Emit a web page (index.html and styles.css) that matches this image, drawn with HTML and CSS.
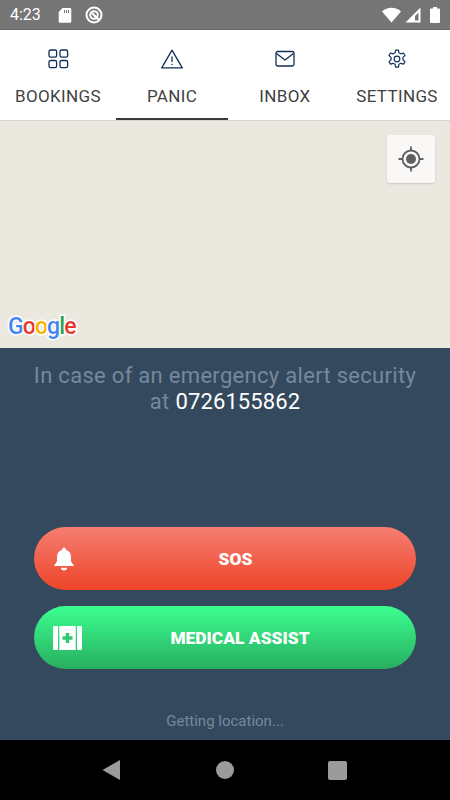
FILE: index.html
```html
<!DOCTYPE html>
<html lang="en">
<head>
    <meta charset="UTF-8">
    <meta name="viewport" content="width=device-width, initial-scale=1.0">
    <title>Panic</title>
    <link rel="stylesheet" href="styles.css">
</head>
<body>

    <!-- Status bar -->
    <div class="status-bar">
        <span class="time">4:23</span>
        <svg class="st-icon" width="14" height="16" viewBox="0 0 14 16"><path d="M4.500 1H12a1.300 1.300 0 0 1 1.300 1.300v12.200a1.300 1.300 0 0 1-1.300 1.300H2a1.300 1.300 0 0 1-1.300-1.300V5z" fill="#fff"/><path d="M6.500 3v3M8.500 3v3M10.500 3v3" stroke="#757575" stroke-width="1"/></svg>
        <svg class="st-icon st-gap" width="18" height="18" viewBox="0 0 18 18" fill="none" stroke="#fff"><circle cx="9" cy="9" r="7.500" stroke-width="2"/><circle cx="9" cy="9" r="3.800" stroke-width="2"/><path d="M7 7l7 7" stroke-width="2.200"/></svg>
        <div class="st-right">
            <svg width="19" height="16" viewBox="0 0 19 16"><path d="M0 4.500C5 -0.500 14 -0.500 19 4.500L9.500 15.500z" fill="#fff"/></svg>
            <svg width="16" height="16" viewBox="0 0 16 16"><path d="M15.500 .5V15.500H.5z" fill="#fff"/><path d="M10 9v4.500h3.500V5.500z" fill="#757575"/></svg>
            <svg class="batt" width="10" height="16" viewBox="0 0 10 16"><path d="M3 0h4v1.500h2a1 1 0 0 1 1 1V15a1 1 0 0 1-1 1H1a1 1 0 0 1-1-1V2.500a1 1 0 0 1 1-1h2z" fill="#fff"/></svg>
        </div>
    </div>

    <!-- Tabs -->
    <nav class="tabs">
        <div class="tab">
            <svg width="22" height="20" viewBox="0 0 22 20" fill="none" stroke="#0f2f57" stroke-width="1.300"><rect x="2" y="1" width="7.600" height="7.200" rx="1.600"/><rect x="13" y="1" width="7.600" height="7.200" rx="1.600"/><rect x="2" y="11.500" width="7.600" height="7.200" rx="1.600"/><rect x="13" y="11.500" width="7.600" height="7.200" rx="1.600"/></svg>
            <span>BOOKINGS</span>
        </div>
        <div class="tab active">
            <svg width="24" height="20" viewBox="0 0 24 20" fill="none" stroke="#0f2f57" stroke-width="1.300" stroke-linejoin="round"><path d="M12 1.200L22.300 18.800H1.700z"/><path d="M12 7.500v5.500M12 14.700v1.400"/></svg>
            <span>PANIC</span>
        </div>
        <div class="tab">
            <svg width="20" height="18" viewBox="0 0 20 18" fill="none" stroke="#0f2f57" stroke-width="1.300" stroke-linejoin="round"><rect x="1" y="1.500" width="18" height="14.500" rx="1.800"/><path d="M1.500 3.500l8.500 6.500 8.500-6.500"/></svg>
            <span>INBOX</span>
        </div>
        <div class="tab">
            <svg width="20" height="20" viewBox="0 0 24 24" fill="none" stroke="#0f2f57" stroke-width="1.400" stroke-linejoin="round"><path d="M10.300 1.300h3.400l.6 3.300 2.400 1.200 3.100-1 1.800 3.100-2.500 2.200v2.800l2.500 2.200-1.800 3.100-3.100-1-2.400 1.200-.6 3.300h-3.400l-.6-3.300-2.400-1.200-3.100 1-1.800-3.100 2.500-2.200v-2.800l-2.500-2.200 1.800-3.100 3.100 1 2.400-1.200z"/><circle cx="12" cy="12" r="3.400"/></svg>
            <span>SETTINGS</span>
        </div>
    </nav>

    <!-- Map -->
    <div class="map">
        <div class="locate">
            <svg width="28" height="28" viewBox="0 0 28 28" fill="none" stroke="#5f5f5f" stroke-width="1.800"><circle cx="14" cy="14" r="8.500"/><circle cx="14" cy="14" r="5" fill="#5f5f5f" stroke="none"/><path d="M14 1.500v4M14 22.500v4M1.500 14h4M22.500 14h4"/></svg>
        </div>
        <div class="google"><span class="g-blue">G</span><span class="g-red">o</span><span class="g-yellow">o</span><span class="g-blue">g</span><span class="g-green">l</span><span class="g-red">e</span></div>
    </div>

    <!-- Panic panel -->
    <div class="panel">
        <div class="notice">
            <p>In case of an emergency alert security</p>
            <div class="notice-line">
                <span>at</span>
                <span class="phone">0726155862</span>
            </div>
        </div>
        <div class="actions">
            <button class="btn btn-sos">
                <svg class="btn-icon" width="22" height="24" viewBox="0 0 22 24"><path d="M11 .5a1.700 1.700 0 0 1 1.700 1.700v.6c3.500.8 5.300 3.700 5.300 7v3.500c0 1.800 1 3 2.500 4.400.4.500.2 1.300-.5 1.300H2c-.7 0-.9-.8-.5-1.300C3 16.300 4 15.100 4 13.300V9.800c0-3.300 1.800-6.200 5.300-7v-.6A1.700 1.700 0 0 1 11 .5z" fill="#fff"/><path d="M8 20.800h6a3 2.700 0 0 1-6 0z" fill="#fff"/></svg>
                <span>SOS</span>
            </button>
            <button class="btn btn-medical">
                <svg class="btn-icon" width="29" height="25" viewBox="0 0 29 25"><rect x="0" y="0.500" width="5" height="24" rx="1.200" fill="#fff"/><rect x="6.300" y="0.500" width="16.400" height="24" fill="#fff"/><rect x="24" y="0.500" width="5" height="24" rx="1.200" fill="#fff"/><path d="M12.800 7.500h3.400v3.300h3.300v3.400h-3.300v3.300h-3.400v-3.300H9.500v-3.400h3.300z" fill="#2fc873"/></svg>
                <span>MEDICAL ASSIST</span>
            </button>
        </div>
        <p class="location">Getting location...</p>
    </div>

    <!-- Android nav -->
    <div class="sys-nav">
        <svg width="18" height="20" viewBox="0 0 18 20"><path d="M18 0V20L.5 10z" fill="#9b9b9b"/></svg>
        <div class="home"></div>
        <div class="recent"></div>
    </div>

</body>
</html>
```

FILE: styles.css
```css
* {
    margin: 0;
    padding: 0;
    box-sizing: border-box;
}

html, body {
    height: 100%;
    overflow: hidden;
}

body {
    display: flex;
    flex-direction: column;
    font-family: Roboto, "Liberation Sans", sans-serif;
    background: #fff;
}

/* Status bar */
.status-bar {
    flex: 0 0 30px;
    display: flex;
    align-items: center;
    padding: 0 10px;
    background: #757575;
    border-bottom: 1px solid #6a6a6a;
    color: #fff;
}

.time {
    font-size: 16px;
    margin-right: 17px;
}

.st-gap {
    margin-left: 13px;
}

.st-right {
    margin-left: auto;
    display: flex;
    align-items: center;
    gap: 4px;
}

.batt {
    margin-left: 5px;
}

/* Tabs */
.tabs {
    flex: 0 0 91px;
    display: grid;
    grid-template-columns: 116px 112px 114px 110px;
    background: #fff;
    border-bottom: 1px solid #d9d6cf;
}

.tab {
    display: flex;
    flex-direction: column;
    align-items: center;
    padding-top: 19px;
    color: #3f3f3f;
    font-size: 17px;
    font-weight: 400;
    letter-spacing: .35px;
    white-space: nowrap;
}

.tab svg {
    height: 20px;
}

.tab span {
    margin-top: 17px;
}

.tab.active {
    border-bottom: 2px solid #3c3c3c;
}

/* Map */
.map {
    position: relative;
    flex: 0 0 227px;
    background: #ebe8e0;
}

.locate {
    position: absolute;
    top: 14px;
    right: 15px;
    width: 48px;
    height: 48px;
    display: flex;
    align-items: center;
    justify-content: center;
    background: #f9f8f6;
    border-radius: 3px;
    box-shadow: 0 1px 2px rgba(0, 0, 0, 0.15);
}

.google {
    position: absolute;
    left: 8px;
    bottom: 8px;
    font-family: Roboto, sans-serif;
    font-size: 23px;
    font-weight: 500;
    line-height: 26px;
    letter-spacing: -.9px;
    paint-order: stroke fill;
    -webkit-text-stroke: 3px #fff;
}

.g-blue { color: #4285f4; }
.g-red { color: #e8392c; }
.g-yellow { color: #f5b400; }
.g-green { color: #2ba24c; }

/* Panel */
.panel {
    flex: 1;
    display: flex;
    flex-direction: column;
    align-items: center;
    background: #34495e;
}

.notice {
    margin-top: 15px;
    color: #76889c;
    font-size: 22px;
    line-height: 26px;
    letter-spacing: .3px;
    text-align: center;
}

.notice-line {
    display: flex;
    justify-content: center;
    gap: 6px;
}

.phone {
    color: #fff;
    letter-spacing: .1px;
}

.actions {
    margin-top: 112px;
    display: flex;
    flex-direction: column;
    gap: 16px;
}

.btn {
    position: relative;
    width: 382px;
    height: 63px;
    border: none;
    border-radius: 32px;
    color: #fff;
    font-family: inherit;
    font-size: 17.4px;
    font-weight: 900;
}

.btn-sos {
    background: linear-gradient(to bottom, #f57e72, #ee4528);
}

.btn-medical {
    background: linear-gradient(to bottom, #3cff90, #27ae60);
}

.btn-sos span {
    margin-left: 21px;
}

.btn-medical span {
    margin-left: 30px;
}

.btn-icon {
    position: absolute;
    left: 19px;
    top: 50%;
    transform: translateY(-50%);
}

.location {
    margin-top: 43px;
    color: #76889c;
    font-size: 15px;
    line-height: 18px;
}

/* Android nav */
.sys-nav {
    flex: 0 0 60px;
    display: flex;
    align-items: center;
    justify-content: space-between;
    padding: 0 103px 0 102px;
    background: #000;
}

.home {
    width: 18px;
    height: 18px;
    margin-left: 2px;
    border-radius: 50%;
    background: #9b9b9b;
}

.recent {
    width: 19px;
    height: 19px;
    border-radius: 2px;
    background: #9b9b9b;
}
```
